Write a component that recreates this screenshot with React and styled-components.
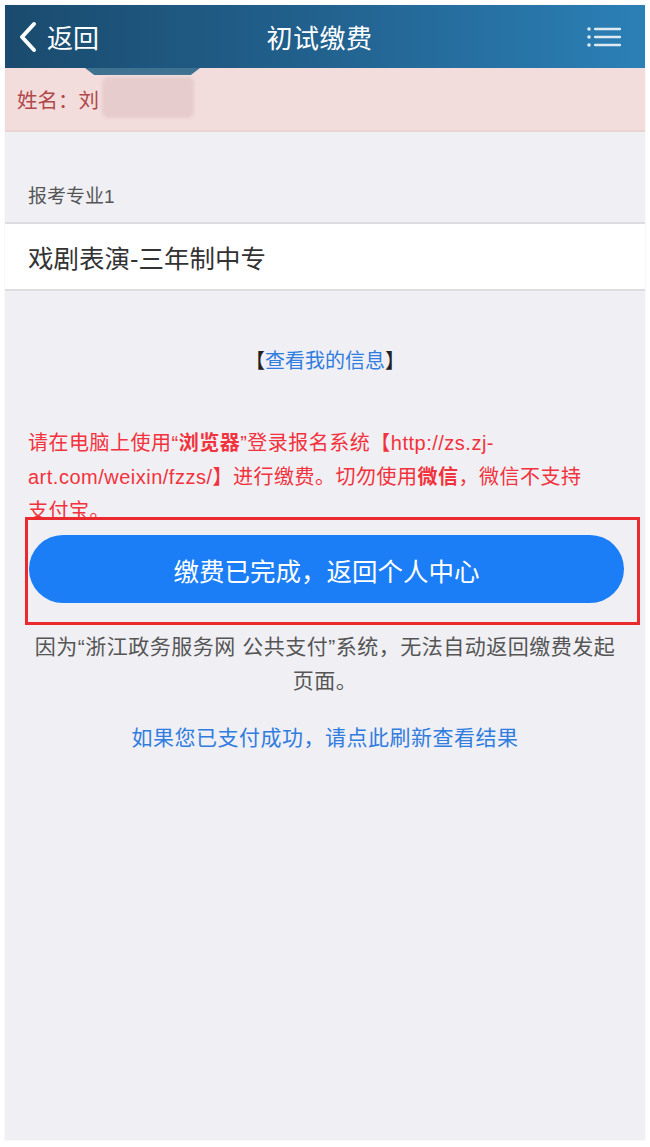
import styled, { createGlobalStyle } from 'styled-components';

const GlobalStyle = createGlobalStyle`
  html, body {
    margin: 0;
    padding: 0;
    background: #ffffff;
  }

  body {
    font-family: "Liberation Sans", "Noto Sans CJK SC", sans-serif;
  }
`;

const StyledPage = styled.div`
  padding: 5px;
`;

const StyledApp = styled.main`
  position: relative;
  display: flex;
  flex-direction: column;
  min-height: 1135px;
  background-color: #efeff4;
  box-shadow: 0 0 2px rgba(0, 0, 0, 0.08);
`;

const StyledHeader = styled.header`
  display: grid;
  grid-template-columns: 1fr auto 1fr;
  align-items: center;
  height: 63px;
  padding: 0 24px 0 13px;
  background: linear-gradient(90deg, #1a4b6e 0%, #22628f 50%, #2b80b6 100%);
  color: #ffffff;
`;

const StyledBack = styled.a`
  display: flex;
  align-items: center;
  gap: 9px;
  font-size: 26px;
  color: #ffffff;
  text-decoration: none;
`;

const StyledTitle = styled.h1`
  margin: 0;
  font-size: 26px;
  font-weight: normal;
  letter-spacing: 0.5px;
`;

const StyledMenu = styled.button`
  justify-self: end;
  display: flex;
  border: 0;
  padding: 0;
  background: none;
  opacity: 0.85;
`;

const StyledNameBar = styled.div`
  position: relative;
  display: flex;
  align-items: center;
  height: 62px;
  padding: 0 12px;
  border-bottom: 2px solid #e9d3d3;
  background-color: #f3dcdc;
  color: #b0484a;
  font-size: 20.5px;
`;

const StyledTab = styled.span`
  position: absolute;
  top: 0;
  left: 80px;
  width: 115px;
  height: 7px;
  background-color: #3f7190;
  clip-path: polygon(0 0, 100% 0, 92% 100%, 8% 100%);
`;

const StyledMask = styled.span`
  position: absolute;
  top: 9px;
  left: 97px;
  width: 92px;
  height: 41px;
  border-radius: 7px;
  background-color: #e6cccc;
  filter: blur(1.5px);
`;

const StyledLabel = styled.div`
  padding: 52px 23px 12px;
  border-bottom: 2px solid #dcdce1;
  font-size: 19px;
  line-height: 26px;
  color: #555555;
`;

const StyledValue = styled.div`
  display: flex;
  align-items: center;
  height: 65px;
  padding: 0 23px;
  border-bottom: 2px solid #dcdce1;
  background-color: #ffffff;
  font-size: 25.5px;
  color: #333333;
`;

const StyledInfo = styled.p`
  margin: 55px 0 0;
  text-align: center;
  font-size: 20px;
  line-height: 30px;
  color: #222222;
`;

const StyledLink = styled.a`
  color: #2f7ddf;
  text-decoration: none;
`;

const StyledNotice = styled.p`
  margin: 50px 0 0;
  padding: 0 50px 0 23px;
  font-size: 20px;
  letter-spacing: 0.5px;
  line-height: 34px;
  color: #f2323c;

  b {
    font-weight: bold;
  }
`;

const StyledHighlight = styled.div`
  position: relative;
  margin: -11px 5px 0 20px;
  padding: 15px 13px 19px 1px;
  border: 3px solid #ea2a2f;
`;

const StyledButton = styled.button`
  display: block;
  width: 100%;
  height: 68px;
  border: 0;
  border-radius: 34px;
  background-color: #1b7ef6;
  color: #ffffff;
  font-family: inherit;
  font-size: 25.5px;
`;

const StyledHint = styled.p`
  margin: 5px 0 0;
  padding: 0 26px;
  text-align: center;
  font-size: 21px;
  letter-spacing: 0.5px;
  line-height: 34px;
  color: #555555;
`;

const StyledRefresh = styled.p`
  margin: 23px 0 0;
  text-align: center;
  font-size: 21px;
  letter-spacing: 0.5px;
  line-height: 34px;
`;

function BackIcon() {
  return (
    <svg width='20' height='32' viewBox='0 0 20 32' fill='none'>
      <path d='M16 3 L4 16 L16 29' stroke='#ffffff' strokeWidth='4' strokeLinecap='round' strokeLinejoin='round' />
    </svg>
  );
}

function MenuIcon() {
  return (
    <svg width='34' height='22' viewBox='0 0 34 22' fill='none'>
      {[3, 11, 19].map((y) => (
        <g key={y}>
          <circle cx='2' cy={y} r='1.8' fill='#ffffff' />
          <rect x='7' y={y - 1.2} width='27' height='2.4' rx='1' fill='#ffffff' />
        </g>
      ))}
    </svg>
  );
}

export default function App() {
  return (
    <>
      <GlobalStyle />
      <StyledPage>
        <StyledApp>
          <StyledHeader>
            <StyledBack href='#'>
              <BackIcon />
              返回
            </StyledBack>
            <StyledTitle>初试缴费</StyledTitle>
            <StyledMenu aria-label='菜单'>
              <MenuIcon />
            </StyledMenu>
          </StyledHeader>

          <StyledNameBar>
            姓名：刘
            <StyledTab />
            <StyledMask />
          </StyledNameBar>

          <StyledLabel>报考专业1</StyledLabel>
          <StyledValue>戏剧表演-三年制中专</StyledValue>

          <StyledInfo>
            【<StyledLink href='#'>查看我的信息</StyledLink>】
          </StyledInfo>

          <StyledNotice>
            请在电脑上使用“<b>浏览器</b>”登录报名系统【http://zs.zj-art.com/weixin/fzzs/】进行缴费。切勿使用<b>微信</b>，微信不支持支付宝。
          </StyledNotice>

          <StyledHighlight>
            <StyledButton>缴费已完成，返回个人中心</StyledButton>
          </StyledHighlight>

          <StyledHint>因为“浙江政务服务网 公共支付”系统，无法自动返回缴费发起页面。</StyledHint>

          <StyledRefresh>
            <StyledLink href='#'>如果您已支付成功，请点此刷新查看结果</StyledLink>
          </StyledRefresh>
        </StyledApp>
      </StyledPage>
    </>
  );
}
